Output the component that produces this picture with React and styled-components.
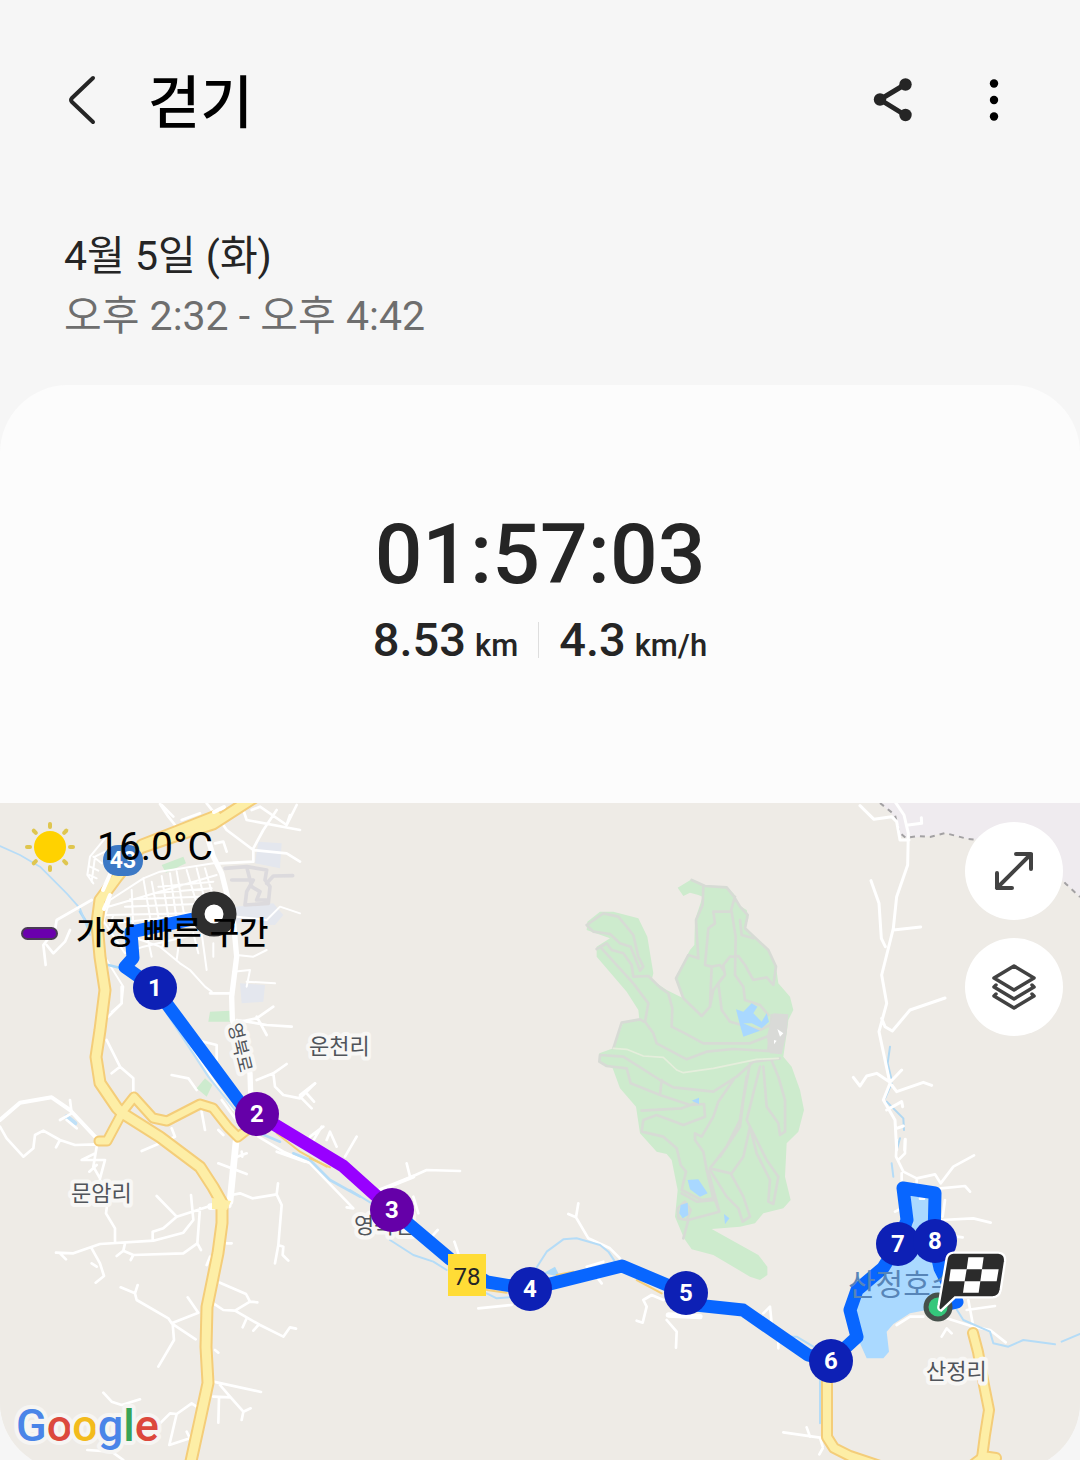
import React from "react";
import styled, { createGlobalStyle } from "styled-components";

const GlobalStyle = createGlobalStyle`
  * { box-sizing: border-box; }
  body {
    margin: 0;
    background: #f6f6f6;
    color: #252525;
    font-family: Roboto, "Noto Sans CJK KR", sans-serif;
  }
  h1, p { margin: 0; }
`;

const Screen = styled.div`
  height: 100vh;
  overflow: hidden;
  display: flex;
  flex-direction: column;
`;

const Header = styled.header`
  display: flex;
  align-items: center;
  padding: 56px 48px 0 44px;
`;

const IconButton = styled.button`
  width: 76px;
  height: 80px;
  display: grid;
  place-items: center;
  padding: 0;
  border: 0;
  background: none;
  color: ${(p) => p.$color || "#252525"};
  cursor: pointer;
`;

const Title = styled.h1`
  flex: 1;
  margin-left: 28px;
  padding-top: 8px;
  color: #000;
  font-size: 57px;
  line-height: 80px;
  font-weight: 500;
`;

const Actions = styled.div`
  display: flex;
  gap: 26px;
`;

const Period = styled.div`
  padding: 82px 64px 39px;
  font-size: 41px;
  line-height: 60px;
`;

const PeriodLine = styled.p`
  color: ${(p) => (p.$muted ? "#6e6e6e" : "#252525")};
`;

const Card = styled.main`
  flex: none;
  overflow: hidden;
  border-radius: 68px;
  background: #fcfcfc;
`;

const Summary = styled.section`
  display: flex;
  flex-direction: column;
  align-items: center;
  padding: 120px 24px 131px;
`;

const Duration = styled.p`
  font-size: 84px;
  line-height: 100px;
  font-weight: 500;
`;

const Stats = styled.div`
  display: flex;
  align-items: center;
  margin-top: 3px;
  height: 64px;
`;

const Stat = styled.p`
  padding: 6px 20px 0;
  font-size: 47px;
  line-height: 60px;
  font-weight: 500;
`;

const Divider = styled.span`
  width: 1px;
  height: 36px;
  background: #dedede;
`;

const Unit = styled.span`
  margin-left: 9px;
  font-size: 31px;
`;

const MapPanel = styled.section`
  position: relative;
  background: #eeebe6;
`;

const MapDrawing = styled.svg`
  display: block;
  width: 100%;
  height: auto;
`;

const MapInfo = styled.div`
  position: absolute;
  top: 18px;
  left: 21px;
  color: #000;
`;

const Weather = styled.p`
  display: flex;
  align-items: center;
  gap: 22px;
  height: 52px;
  padding-left: 4px;
  font-size: 39px;
`;

const Legend = styled.p`
  display: flex;
  align-items: center;
  gap: 18px;
  height: 48px;
  margin-top: 36px;
  font-size: 32px;
  line-height: 48px;
  font-weight: 500;
`;

const Swatch = styled.span`
  width: 37px;
  height: 13px;
  border: 2px solid #4a3a55;
  border-radius: 7px;
  background: #6a00ad;
`;

const MapTools = styled.div`
  position: absolute;
  top: 19px;
  right: 17px;
  display: flex;
  flex-direction: column;
  gap: 18px;
`;

const RoundButton = styled.button`
  width: 98px;
  height: 98px;
  display: grid;
  place-items: center;
  padding: 0;
  border: 0;
  border-radius: 50%;
  background: #fff;
  color: #424242;
  cursor: pointer;
`;

const PlaceName = styled.text`
  font-family: "Noto Sans CJK KR", sans-serif;
  font-size: ${(p) => p.$size || 22}px;
  fill: ${(p) => p.$color || "#50545a"};
  stroke: ${(p) => (p.$plain ? "none" : "#f8f7f5")};
  stroke-width: 8px;
  stroke-linejoin: round;
  paint-order: stroke;
`;

const MarkerNumber = styled.text`
  font-family: Roboto, sans-serif;
  font-size: 24px;
  font-weight: 700;
  fill: #fff;
  text-anchor: middle;
`;

const ShieldNumber = styled.text`
  font-family: Roboto, sans-serif;
  font-size: ${(p) => p.$size}px;
  font-weight: ${(p) => p.$weight || 400};
  fill: ${(p) => p.$color};
  text-anchor: middle;
`;

const Wordmark = styled.text`
  font-family: Roboto, sans-serif;
  font-size: 45px;
  font-weight: 500;
  stroke: #f6f5f3;
  stroke-width: 8px;
  stroke-linejoin: round;
  paint-order: stroke;
`;

/* Map tiles are drawn at three times the screen density. */
const Tile = ({ x, y, children }) => (
  <g transform={`translate(${x} ${y}) scale(${1 / 3})`}>{children}</g>
);

const Roads = ({ d, width = 8, color = "#fff" }) => (
  <path d={d} fill="none" stroke={color} strokeWidth={width} strokeLinejoin="round" strokeLinecap="round" />
);

const highways = [
  ["M255 797L213 824L178 835L140 848L117 877L100 900L97 923L100 957L105 990L100 1030L96 1057L100 1083L117 1108L122 1113L160 1137L200 1167L213 1187L222 1203L222 1223L218 1253L207 1307L206 1347L208 1383L200 1420L188 1475", 9],
  ["M216 816L178 831L142 845", 9],
  ["M122 1113L107 1141L99 1141", 7],
  ["M123 1111L134 1097L153 1118L167 1121L200 1104L213 1108L228 1127L238 1137L252 1126", 7],
  ["M827 1370L827 1437L834 1448L850 1456L880 1466", 8],
  ["M973 1333L978 1352L984 1385L989 1410L985 1435L982 1458L974 1464M982 1456L996 1458", 8],
];

const markers = [
  [1, 155, 988], [2, 257, 1114], [3, 392, 1210], [4, 530, 1289],
  [5, 686, 1293], [6, 831, 1361], [7, 898, 1244], [8, 935, 1241],
];

function RouteMap() {
  return (
    <MapDrawing viewBox="0 803 1080 667" role="img" aria-label="걷기 경로 지도">
      <rect x="0" y="803" width="1080" height="667" fill="#eeebe6" />

      {/* military area at the north-east */}
      <path d="M880 803L897 819L900 836L908 838L930 836L945 833L968 839L1010 842L1063 881L1080 897V803Z" fill="#efebef" />
      <path d="M880 803L895 815L899 832L906 838L918 836L930 837L945 833L968 839L1010 842L1040 858L1066 884L1080 897" fill="none" stroke="#a3a1a3" strokeWidth="2" strokeDasharray="5 5" />

      {/* town centre */}
      <Tile x={80} y={800}>
        <path d="M535 125L605 130L600 205L525 190Z M465 320L580 310L610 345L585 375L465 370Z M480 550L555 555L550 605L485 610Z" fill="#e4e7ee" />
        <path d="M245 195L310 170L318 190L258 218Z M390 635L450 632L450 665L385 665Z" fill="#cdebce" />
        <Roads color="#dcdadd" width={11} d="M435 205L500 200L560 210L555 240L570 260L565 310L495 315L500 275L520 240L455 240M500 200L515 260L540 275L530 300L560 300M560 250L580 228L638 227" />
        <Roads d="M240 12L265 50L285 75M380 10L420 60L440 90L520 150L520 185L420 190M490 30L500 60L660 90M590 30L550 90L520 145M515 30L540 20L620 75L650 15M620 75L630 45M405 130L430 125L440 155M520 150L620 160L660 185" />
        <Roads d="M75 115L30 170L22 225L40 250M75 155L45 170L35 245M30 200L55 212M40 170L65 190M28 225L50 235M65 380L90 300L190 235L240 215L400 190M85 320L410 225M190 235L215 380M155 270L160 385M215 245L240 375M245 228L268 370M270 220L290 360M290 214L315 360M320 210L350 310M350 205L372 290M375 205L395 275M235 260L400 245M220 280L395 265M150 298L360 290M135 320L350 312M80 345L335 340M100 370L330 345M100 345L90 375" width={6} />
        <Roads d="M65 355L135 460L190 440L340 405M140 405L240 440L300 490L330 510L375 560L395 575M200 400L215 470M260 405L245 445M300 405L290 480M340 400L355 460M365 400L380 510M400 430L400 470M80 480L130 560L125 610L95 635M470 465L520 470L560 450M460 515L510 510L500 560M500 545L585 550M470 350L560 360L600 320L660 340" width={6} />
        <Roads d="M0 335L40 400M85 495L145 510" color="#a9d8f8" />
      </Tile>
      <Tile x={0} y={790}>
        <Roads d="M0 168L60 195L120 230L200 310L240 355L270 435" width={5} color="#b7dcf7" />
        <Roads d="M275 330L170 390L165 420L130 465L137 525M210 420L195 455L160 490L140 465M600 70L545 90M485 45L520 80M365 590L365 640L325 680M320 750L360 830L400 865L400 905M360 830L335 850M515 855L565 865L590 900M590 750L650 765L650 810M700 700L770 685L820 650M710 690L800 705L875 710M770 680L800 735M630 610L690 610M770 870L820 850L860 822M820 850L825 890L850 915L900 925L945 880M900 920L935 955" />
        <Roads d="M410 570L500 660L700 960" width={6} />
        <Roads d="M500 670L625 860L705 960" width={6} color="#bcdff7" />
        <path d="M615 865L637 885L620 920L590 895Z" fill="#cdebce" />
        <Roads d="M625 150L640 200L665 250L700 390L710 500L695 620L697 690L750 850L752 910" width={16} />
        <Roads d="M0 990L60 938L155 922L210 960L290 1045" width={12} />
      </Tile>

      {/* south-west lanes */}
      <Tile x={0} y={1100}>
        <Roads d="M200 50L225 70" width={14} color="#bfe0f7" />
        <Roads d="M0 80L20 115L70 170L100 145L105 105L130 92L180 120L225 135L290 133M180 120L168 142M180 60L215 40L210 0M200 60L230 85M290 140L280 200L300 235L315 180L245 180L285 160M268 215L290 195M300 240L325 290L318 340L345 385L345 425M168 458L220 460L300 432L460 422L550 398L580 360L573 285M470 288L530 350L490 385L458 395L458 420M530 350L630 318M600 325L592 430L550 460L400 465L370 452L350 468M370 452L375 430M400 465L392 480M592 430L603 450M275 445L300 490L312 528L287 548M275 490L290 500M180 460L198 478M362 562L405 580L410 600L505 655L515 670L595 638L563 592M405 580L413 555M515 670L587 718M518 672L522 720L475 800M660 548L738 582L750 605L772 607M640 610L670 630L705 632L750 605M705 632L780 675L850 710L870 682L888 686M740 655L728 682M775 675L760 692M645 750L655 758M640 845L783 876M660 855L690 890L730 935L725 960M730 935L752 925M640 890L690 892M657 895L655 968M310 878L335 905L365 915L420 898M480 970L510 940L530 942L575 910L590 920M530 942L508 1035L570 1015M560 995L570 1015M262 1050L335 1055L370 1080M695 285L720 280L757 295L830 283L845 315L835 435L825 490M830 283L834 250M835 435L850 440L848 465L865 482M655 190L740 222M700 175L740 160M725 155L727 170M630 470L620 495M605 35L615 90M425 153L525 110L515 85M655 90L670 105M930 110L970 80M935 130L965 80M980 120L990 95L1010 140M1035 170L1070 110M680 430L695 430" />
        <Roads d="M690 305L708 125" width={20} />
        <Roads d="M665 0L705 55" />
        <Roads d="M775 110L850 155L930 190L1060 325L1040 322M830 155L915 185" />
        <Roads d="M780 100L840 125M880 160L930 180L990 240L1080 290" color="#b5dcf7" width={8} />
        <Roads d="M830 100L900 155L980 200" color="#f5cf7b" width={6} />
        <Roads d="M632 320L685 315" width={20} />
      </Tile>

      {/* middle lanes and stream */}
      <Tile x={300} y={1080}>
        <Roads d="M0 45L45 10M20 40L42 65M240 335L335 290L380 270L480 273M320 250L330 290M355 400L340 350M395 470L413 450M463 485L475 520M835 370L828 412L805 402M828 412L865 475L930 505L960 535M535 685L635 675M890 590L905 610M860 560L910 545M1090 660L1055 645L1030 660L1040 680L1028 728L1010 722M1100 720L1130 755L1128 803" />
        <Roads d="M240 330L340 290" width={12} />
        <Roads d="M150 330L215 370M270 480L340 525L400 545L440 570M560 640L590 655L630 652M705 570L740 515L790 478L830 475L900 495L925 515L945 545" color="#b5dcf7" width={6} />
        <path d="M310 460L340 420L360 460L350 475ZM730 580L765 560L780 590Z" fill="#addaf8" />
        <Roads d="M30 235L90 262M560 630L620 638M770 585L820 575M1010 600L1085 640" color="#f5cf7b" width={6} />
        <Roads d="M1105 705L1200 710" width={16} />
      </Tile>

      {/* golf course */}
      <Tile x={560} y={850}>
        <path d="M353 113L395 88L430 108L500 110L522 132L535 165L560 180L565 205L555 235L625 300L648 350L655 400L690 440L700 480L685 510L680 550L670 620L695 650L720 720L732 780L715 845L680 880L675 980L692 1050L670 1075L610 1090L585 1120L540 1130L455 1137L595 1215L622 1250L622 1275L600 1290L570 1280L460 1215L395 1198L372 1165L345 1100L353 1020L335 930L320 912L290 905L240 850L228 770L180 715L158 655L118 635L118 610L160 595L190 515L238 508L235 480L200 425L110 320L110 290L150 265L80 240L82 215L120 185L160 185L235 205L262 260L280 370L275 390L320 420L370 445L345 385L390 300L403 285L405 210L428 140L415 135L390 128L370 138Z" fill="#cdebcd" />
        <Roads color="#d7dbd5" width={8} d="M395 90L435 108L500 112L522 140L540 170L563 195L555 235L625 300L648 350L640 405L620 382L580 390L555 345L535 318L510 320L490 345L495 375L475 400L485 480L510 515L600 540L630 525M430 110L428 165L408 210L415 325L385 315L348 385L370 445L425 498L450 470L460 420L490 380M525 140L512 185L460 185L465 220L445 235L435 345L455 350L480 345L490 360M515 185L527 260L525 375L550 410L555 450L600 465L625 495M455 350L450 470M540 210L545 255L580 265" />
        <Roads color="#d7dbd5" width={8} d="M80 225L130 190L175 200L220 255L235 320L250 350L240 362L212 290L180 280L150 252L100 245L80 225M110 297L140 280L155 300L190 310L215 345L220 380L265 378L300 412L325 430L337 475L335 530L375 550L430 580L570 580L620 560M120 290L220 400L265 460L255 515L280 550L290 580L380 628L440 605L520 597L660 605M160 595L185 518L240 508L252 515M635 495L625 600M660 500L655 605" />
        <Roads color="#d7dbd5" width={8} d="M660 625L580 635L530 680L460 725L340 712L300 690L190 620L120 615L118 635L140 648L200 655L212 700L300 735L305 690M300 735L390 765L432 762L435 800L370 825L290 795L250 810L245 845L310 860L350 895L362 945L378 965L365 1020L425 1050L460 1045L440 960L430 905L405 870L405 850L425 860L460 800L475 755L520 690M245 782L365 775L410 758M560 680L540 810L500 890L450 955L512 970L550 1040L570 1100L548 1115L535 1075L500 1040L450 960M600 650L560 810L620 930L655 980L640 1062L625 1055L630 990L590 910L570 830L550 920L515 970M610 650L620 770L655 820L660 855L675 845L675 750L655 680L635 632M570 640L550 750L540 830L480 920M365 1030L410 1055L465 1050L478 1085L385 1110L370 1165M445 965L478 1085M353 1075L375 1055L392 1080L380 1110L355 1105L353 1075" />
        <path d="M640 490L685 493L680 550L665 613L630 610L620 560Z" fill="#d9dad7" />
        <Roads color="#e5eedc" width={5} d="M160 595L200 598L250 618L310 622L350 660L370 668L460 655L590 628L655 625" />
        <path d="M528 478L550 485L575 460L592 470L580 490L605 515L620 490L627 515L605 535L575 520L550 520L600 542L550 560L540 525ZM383 990L415 988L443 1030L420 1040L390 1018ZM362 1065L383 1058L385 1095L368 1105L358 1090ZM395 752L417 743L417 762ZM492 1092L508 1105L495 1123Z" fill="#a9d8ff" />
        <path d="M652 537L670 550L660 560ZM642 570L650 572L642 583Z" fill="#fff" />
      </Tile>

      {/* north-east lane */}
      <Tile x={780} y={790}>
        <Roads d="M330 770L323 820L335 870M335 880L315 925M320 935L370 985L372 1020M360 1045L350 1080" width={6} color="#b1d8f2" />
        <Roads d="M240 47L282 88L335 80L350 95L360 150L387 150M345 35L372 75L385 130L383 225L350 320L340 415L305 555L320 640L297 725L330 880L310 930L345 990L350 1080M385 105L425 100L424 83M273 272L297 340L304 445L316 470M340 420L422 411M305 685L315 710L337 723L390 660L495 624M220 862L240 888L260 858L290 850L330 877L365 840M335 885L350 905L430 877L455 886M320 960L365 935L368 950M350 1015L370 1008M376 1048L374 1080" width={9} />
      </Tile>

      {/* lake and surroundings */}
      <Tile x={760} y={1140}>
        <Roads d="M410 0L408 50L430 95L470 115L525 103L542 130L580 80L642 46M435 0L435 40L415 60M425 100L425 120M542 145L615 138L630 155M470 115L470 130M555 180L548 230M545 240L640 235L692 248M590 290L608 292M10 520L30 500L35 550M70 877L180 893L188 920M140 862L150 890M188 925L178 943M625 480L640 560M620 510L705 498M560 535L640 560L690 570L737 607M545 590L560 565L575 580M410 555L450 530L490 530M405 215L415 210M55 600L55 625" />
        <Roads d="M395 70L400 110M585 500L610 540L690 575L700 610L745 620L790 600L885 613M905 605L960 582M55 590L110 590L160 620M180 710L180 850" color="#b5dcf7" width={6} />
        <path d="M450 165L505 178L505 245L500 320L535 385L555 440L500 510L450 520L400 552L380 575L387 635L370 655L320 655L300 610L275 625L245 635L290 590L290 460L400 360L460 250Z" fill="#aad9ff" />
        <Roads d="M480 176L492 176" />
      </Tile>

      {highways.map(([d, w]) => <Roads key={d} d={d} width={w + 4} color="#f4cd79" />)}
      {highways.map(([d, w]) => <Roads key={d} d={d} width={w} color="#fdeea6" />)}
      <path d="M212 1198L231 1201L227 1210L212 1209Z" fill="#fdeea6" />
      <Roads d="M103 890L116 861" width={4} />
      <Roads d="M104 909L110 895" width={4} />
      <Roads d="M214 812L224 807" width={4} />

      {/* place names */}
      <PlaceName x="309" y="1054">운천리</PlaceName>
      <PlaceName x="71" y="1201">문암리</PlaceName>
      <PlaceName x="354" y="1233">영북면</PlaceName>
      <PlaceName x="926" y="1379">산정리</PlaceName>
      <PlaceName $size={18} transform="translate(228 1025) rotate(76)">영북로</PlaceName>

      {/* walked route */}
      <g fill="none" strokeWidth="13" strokeLinejoin="round">
        <path stroke="#0866ff" d="M193 919L131 932L133 958L125 967L155 988L241 1104L257 1114" />
        <path stroke="#0866ff" d="M392 1210L450 1259L487 1282L530 1289L622 1266L686 1293M686 1304L743 1310L808 1355L831 1361L857 1337L850 1310L857 1290L883 1268L898 1244L907 1220L903 1188L935 1193L934 1241L940 1268L957 1302L940 1306" />
        <path stroke="#9800ff" d="M257 1114L343 1166L392 1210" />
      </g>
      <PlaceName $size={30} $color="#5785b8" $plain x="848" y="1295">산정호수</PlaceName>

      {/* road shields */}
      <rect x="103" y="845" width="40" height="31" rx="15" fill="#3b78c5" />
      <ShieldNumber $size={23} $weight={700} $color="#fff" x="123" y="868">43</ShieldNumber>
      <rect x="448" y="1254" width="38" height="42" fill="#ffdc36" />
      <ShieldNumber $size={24} $color="#252525" x="467" y="1285">78</ShieldNumber>

      {/* start and kilometre markers */}
      <circle cx="214" cy="914" r="16" fill="#fff" stroke="#2e2e2e" strokeWidth="13" />
      {markers.map(([n, x, y]) => (
        <g key={n}>
          <circle cx={x} cy={y} r="22" fill={n === 2 || n === 3 ? "#6500a8" : "#0d20b5"} />
          <MarkerNumber x={x} y={y + 8}>{n}</MarkerNumber>
        </g>
      ))}

      {/* finish flag */}
      <circle cx="938" cy="1307" r="12" fill="#34c77b" stroke="#46504b" strokeWidth="5" />
      <Tile x={900} y={1230}>
        <path d="M160 68L295 68Q318 70 315 95L302 180Q298 202 277 202L165 202L123 242Q112 240 116 225L140 85Q143 70 160 68Z" fill="#2b2b2b" stroke="#fff" strokeWidth="7" />
        <path d="M205 82L251 82L246 118L296 118L290 154L241 154L236 188L189 188L194 154L147 154L152 118L200 118Z" fill="#fff" />
        <path d="M200 118L246 118L241 154L194 154Z" fill="#2b2b2b" />
      </Tile>

      <Wordmark x="16" y="1441">
        <tspan fill="#4a85e8">G</tspan><tspan fill="#dc483c">o</tspan><tspan fill="#f3bb1c">o</tspan><tspan fill="#4a85e8">g</tspan><tspan fill="#38a457">l</tspan><tspan fill="#dc483c">e</tspan>
      </Wordmark>
    </MapDrawing>
  );
}

const BackIcon = () => (
  <svg width="28" height="52" viewBox="0 0 28 52" fill="none" stroke="currentColor" strokeWidth="4" strokeLinecap="round" strokeLinejoin="round" aria-hidden="true">
    <path d="M25 4L4 24Q2 26 4 28L25 48" />
  </svg>
);

const ShareIcon = () => (
  <svg width="40" height="44" viewBox="0 0 40 44" fill="currentColor" aria-hidden="true">
    <path d="M33 6.500L8 21.500L33 37" fill="none" stroke="currentColor" strokeWidth="5" />
    <circle cx="33.500" cy="6.500" r="6.200" />
    <circle cx="8" cy="21.500" r="6.200" />
    <circle cx="33.500" cy="37" r="6.200" />
  </svg>
);

const MoreIcon = () => (
  <svg width="10" height="44" viewBox="0 0 10 44" fill="currentColor" aria-hidden="true">
    <circle cx="5" cy="5.500" r="4.200" />
    <circle cx="5" cy="22" r="4.200" />
    <circle cx="5" cy="38.500" r="4.200" />
  </svg>
);

const SunIcon = () => (
  <svg width="50" height="50" viewBox="0 0 50 50" aria-hidden="true">
    <circle cx="25" cy="25" r="16" fill="#ffd200" />
    <g stroke="#dfc64f" strokeWidth="4" strokeLinecap="round">
      {[0, 45, 90, 135, 180, 225, 270, 315].map((a) => (
        <path key={a} d="M25 2V5" transform={`rotate(${a} 25 25)`} />
      ))}
    </g>
  </svg>
);

const ExpandIcon = () => (
  <svg width="40" height="40" viewBox="0 0 40 40" fill="none" stroke="currentColor" strokeWidth="4" strokeLinecap="round" strokeLinejoin="round" aria-hidden="true">
    <path d="M3 37L37 3M22 3H37V18M3 22V37H18" />
  </svg>
);

const LayersIcon = () => (
  <svg width="44" height="46" viewBox="0 0 44 46" fill="none" stroke="currentColor" strokeWidth="3.500" strokeLinecap="round" strokeLinejoin="round" aria-hidden="true">
    <path d="M22 2L42 14L22 26L2 14ZM4 21L2 23L22 35L42 23L40 21M4 30L2 32L22 44L42 32L40 30" />
  </svg>
);

export default function App() {
  return (
    <>
      <GlobalStyle />
      <Screen>
        <Header>
          <IconButton aria-label="뒤로"><BackIcon /></IconButton>
          <Title>걷기</Title>
          <Actions>
            <IconButton aria-label="공유"><ShareIcon /></IconButton>
            <IconButton aria-label="더보기" $color="#000"><MoreIcon /></IconButton>
          </Actions>
        </Header>
        <Period>
          <PeriodLine>4월 5일 (화)</PeriodLine>
          <PeriodLine $muted>오후 2:32 - 오후 4:42</PeriodLine>
        </Period>
        <Card>
          <Summary>
            <Duration>01:57:03</Duration>
            <Stats>
              <Stat>8.53<Unit>km</Unit></Stat>
              <Divider />
              <Stat>4.3<Unit>km/h</Unit></Stat>
            </Stats>
          </Summary>
          <MapPanel>
            <RouteMap />
            <MapInfo>
              <Weather><SunIcon />16.0°C</Weather>
              <Legend><Swatch />가장 빠른 구간</Legend>
            </MapInfo>
            <MapTools>
              <RoundButton aria-label="지도 확대"><ExpandIcon /></RoundButton>
              <RoundButton aria-label="지도 유형"><LayersIcon /></RoundButton>
            </MapTools>
          </MapPanel>
        </Card>
      </Screen>
    </>
  );
}
